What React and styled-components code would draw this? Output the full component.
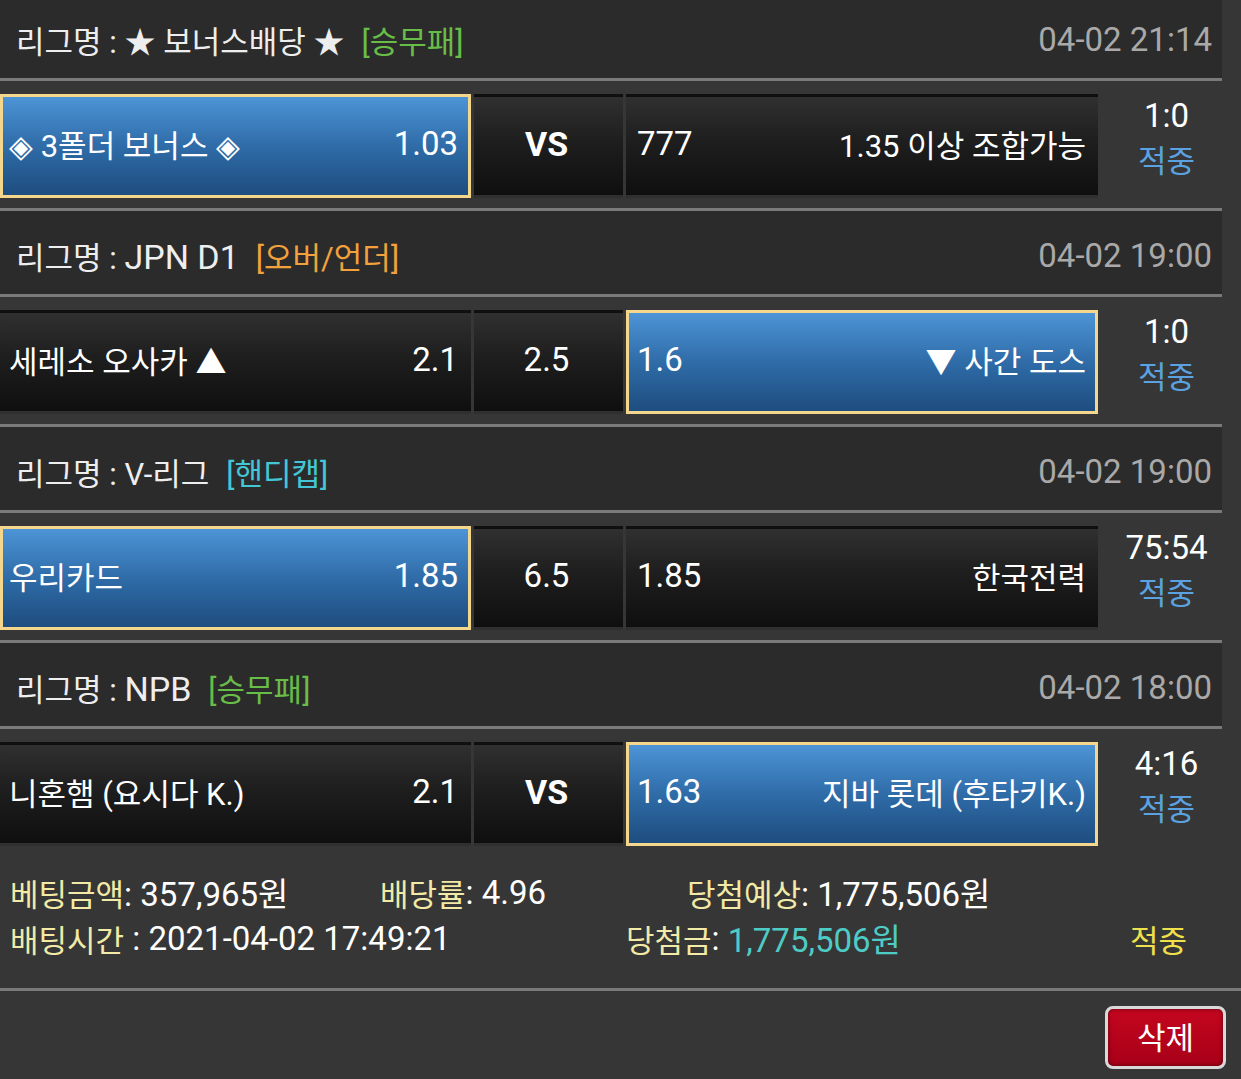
import React from "react";
import styled, { createGlobalStyle } from "styled-components";

const GlobalStyle = createGlobalStyle`
  body {
    margin: 0;
    background: #363636;
    font-family: Roboto, "Noto Sans CJK KR", sans-serif;
    color: #fff;
    overflow: hidden;
  }
`;

// the screenshot is scrolled a few pixels into the list
const Page = styled.div`
  width: 1241px;
  min-height: 1084px;
  margin-top: -5px;
  background: #363636;
`;

const MatchList = styled.div`
  width: 1222px;
`;

const LeagueHeader = styled.div`
  height: 83px;
  box-sizing: border-box;
  display: flex;
  align-items: center;
  justify-content: space-between;
  padding: 6px 10px 0 16px;
  background: #2b2b2b;
`;

const LeagueName = styled.div`
  font-size: 31px;
  color: #eee;
  white-space: nowrap;
`;

const LeagueTitle = styled.span`
  font-size: ${(props) => (props.latin ? "34px" : "31px")};
`;

const BetType = styled.span`
  margin-left: 17px;
  color: ${(props) => props.color};
`;

const MatchTime = styled.div`
  font-size: 33px;
  color: #a9a9a9;
`;

const Divider = styled.div`
  height: 3px;
  background: #7a7a7a;
`;

const MatchRow = styled.div`
  display: grid;
  grid-template-columns: 471px 149px 472px 1fr;
  column-gap: 3px;
  padding: 13px 0 10px;
`;

const Cell = styled.div`
  height: 104px;
  box-sizing: border-box;
  display: flex;
  align-items: center;
  justify-content: ${(props) => (props.center ? "center" : "space-between")};
  padding: ${(props) => (props.away ? "0 9px 5px 8px" : "0 10px 5px 6px")};
  border: 3px solid ${(props) => (props.picked ? "#f4d78c" : "transparent")};
  background: ${(props) =>
    props.picked
      ? "linear-gradient(to bottom, #4d94d6 0%, #2f6ca8 50%, #1e4d7f 100%)"
      : "linear-gradient(to bottom, #303030 0%, #1e1e1e 45%, #0f0f0f 100%)"};
  white-space: nowrap;
`;

const TeamName = styled.span`
  font-size: 31px;
`;

const Odds = styled.span`
  font-size: 33px;
`;

const Middle = styled.span`
  font-size: ${(props) => (props.bold ? "34px" : "33px")};
  font-weight: ${(props) => (props.bold ? 700 : 400)};
`;

const ScoreBox = styled.div`
  height: 104px;
  box-sizing: border-box;
  display: flex;
  flex-direction: column;
  align-items: center;
  justify-content: center;
  padding: 0 0 14px 10px;
  line-height: 46px;
`;

const Score = styled.span`
  font-size: 33px;
`;

const Result = styled.span`
  font-size: 31px;
  color: #5ba3e0;
`;

const Summary = styled.div`
  padding: 13px 0 27px 10px;
`;

const SummaryLine = styled.div`
  display: flex;
  height: 46px;
  white-space: nowrap;
`;

const Info = styled.div`
  width: ${(props) => (props.width ? `${props.width}px` : "auto")};
  flex-shrink: 0;
  display: flex;
  align-items: center;
`;

const Label = styled.span`
  font-size: 31px;
  color: ${(props) => props.color || "#f2eaa6"};
`;

const Value = styled.span`
  font-size: 33px;
  white-space: pre;
  color: ${(props) => props.color || "#fff"};
`;

const FullDivider = styled.div`
  height: 3px;
  background: #7a7a7a;
`;

const ButtonBar = styled.div`
  display: flex;
  justify-content: flex-end;
  padding: 15px 15px 10px 0;
`;

const DeleteButton = styled.button`
  width: 121px;
  height: 63px;
  border: 3px solid #d9d9d9;
  border-radius: 8px;
  background: linear-gradient(to bottom, #c4061f 0%, #a80018 100%);
  box-shadow: inset 0 0 4px rgba(0, 0, 0, 0.5);
  color: #fff;
  font-family: Roboto, "Noto Sans CJK KR", sans-serif;
  font-size: 31px;
  padding: 0 0 4px;
`;

const GREEN = "#68bd48";
const ORANGE = "#f2a13c";
const CYAN = "#43c7d6";

const matches = [
  {
    league: "★ 보너스배당 ★",
    type: "[승무패]",
    typeColor: GREEN,
    time: "04-02 21:14",
    home: "◈ 3폴더 보너스 ◈",
    homeOdds: "1.03",
    middle: "VS",
    awayOdds: "777",
    away: "1.35 이상 조합가능",
    pick: "home",
    score: "1:0",
  },
  {
    league: "JPN D1",
    type: "[오버/언더]",
    typeColor: ORANGE,
    time: "04-02 19:00",
    home: "세레소 오사카 ▲",
    homeOdds: "2.1",
    middle: "2.5",
    awayOdds: "1.6",
    away: "▼ 사간 도스",
    pick: "away",
    score: "1:0",
  },
  {
    league: "V-리그",
    type: "[핸디캡]",
    typeColor: CYAN,
    time: "04-02 19:00",
    home: "우리카드",
    homeOdds: "1.85",
    middle: "6.5",
    awayOdds: "1.85",
    away: "한국전력",
    pick: "home",
    score: "75:54",
  },
  {
    league: "NPB",
    type: "[승무패]",
    typeColor: GREEN,
    time: "04-02 18:00",
    home: "니혼햄 (요시다 K.)",
    homeOdds: "2.1",
    middle: "VS",
    awayOdds: "1.63",
    away: "지바 롯데 (후타키K.)",
    pick: "away",
    score: "4:16",
  },
];

const Match = ({ match, last }) => (
  <>
    <LeagueHeader>
      <LeagueName>
        리그명 :{" "}
        <LeagueTitle latin={/^[A-Za-z0-9 ]+$/.test(match.league)}>
          {match.league}
        </LeagueTitle>
        <BetType color={match.typeColor}>{match.type}</BetType>
      </LeagueName>
      <MatchTime>{match.time}</MatchTime>
    </LeagueHeader>
    <Divider />
    <MatchRow>
      <Cell picked={match.pick === "home"}>
        <TeamName>{match.home}</TeamName>
        <Odds>{match.homeOdds}</Odds>
      </Cell>
      <Cell center>
        <Middle bold={match.middle === "VS"}>{match.middle}</Middle>
      </Cell>
      <Cell away picked={match.pick === "away"}>
        <Odds>{match.awayOdds}</Odds>
        <TeamName>{match.away}</TeamName>
      </Cell>
      <ScoreBox>
        <Score>{match.score}</Score>
        <Result>적중</Result>
      </ScoreBox>
    </MatchRow>
    {!last && <Divider />}
  </>
);

export default function App() {
  return (
    <Page>
      <GlobalStyle />
      <MatchList>
        {matches.map((m, i) => (
          <Match key={i} match={m} last={i === matches.length - 1} />
        ))}
      </MatchList>
      <Summary>
        <SummaryLine>
          <Info width={370}>
            <Label>베팅금액</Label>
            <Value>: 357,965원</Value>
          </Info>
          <Info width={307}>
            <Label>배당률</Label>
            <Value>: 4.96</Value>
          </Info>
          <Info>
            <Label>당첨예상</Label>
            <Value>: 1,775,506원</Value>
          </Info>
        </SummaryLine>
        <SummaryLine>
          <Info width={616}>
            <Label>배팅시간</Label>
            <Value> : 2021-04-02 17:49:21</Value>
          </Info>
          <Info width={504}>
            <Label>당첨금</Label>
            <Value>: </Value>
            <Value color="#4fcbc6">1,775,506원</Value>
          </Info>
          <Info>
            <Label color="#f0e04c">적중</Label>
          </Info>
        </SummaryLine>
      </Summary>
      <FullDivider />
      <ButtonBar>
        <DeleteButton>삭제</DeleteButton>
      </ButtonBar>
    </Page>
  );
}
